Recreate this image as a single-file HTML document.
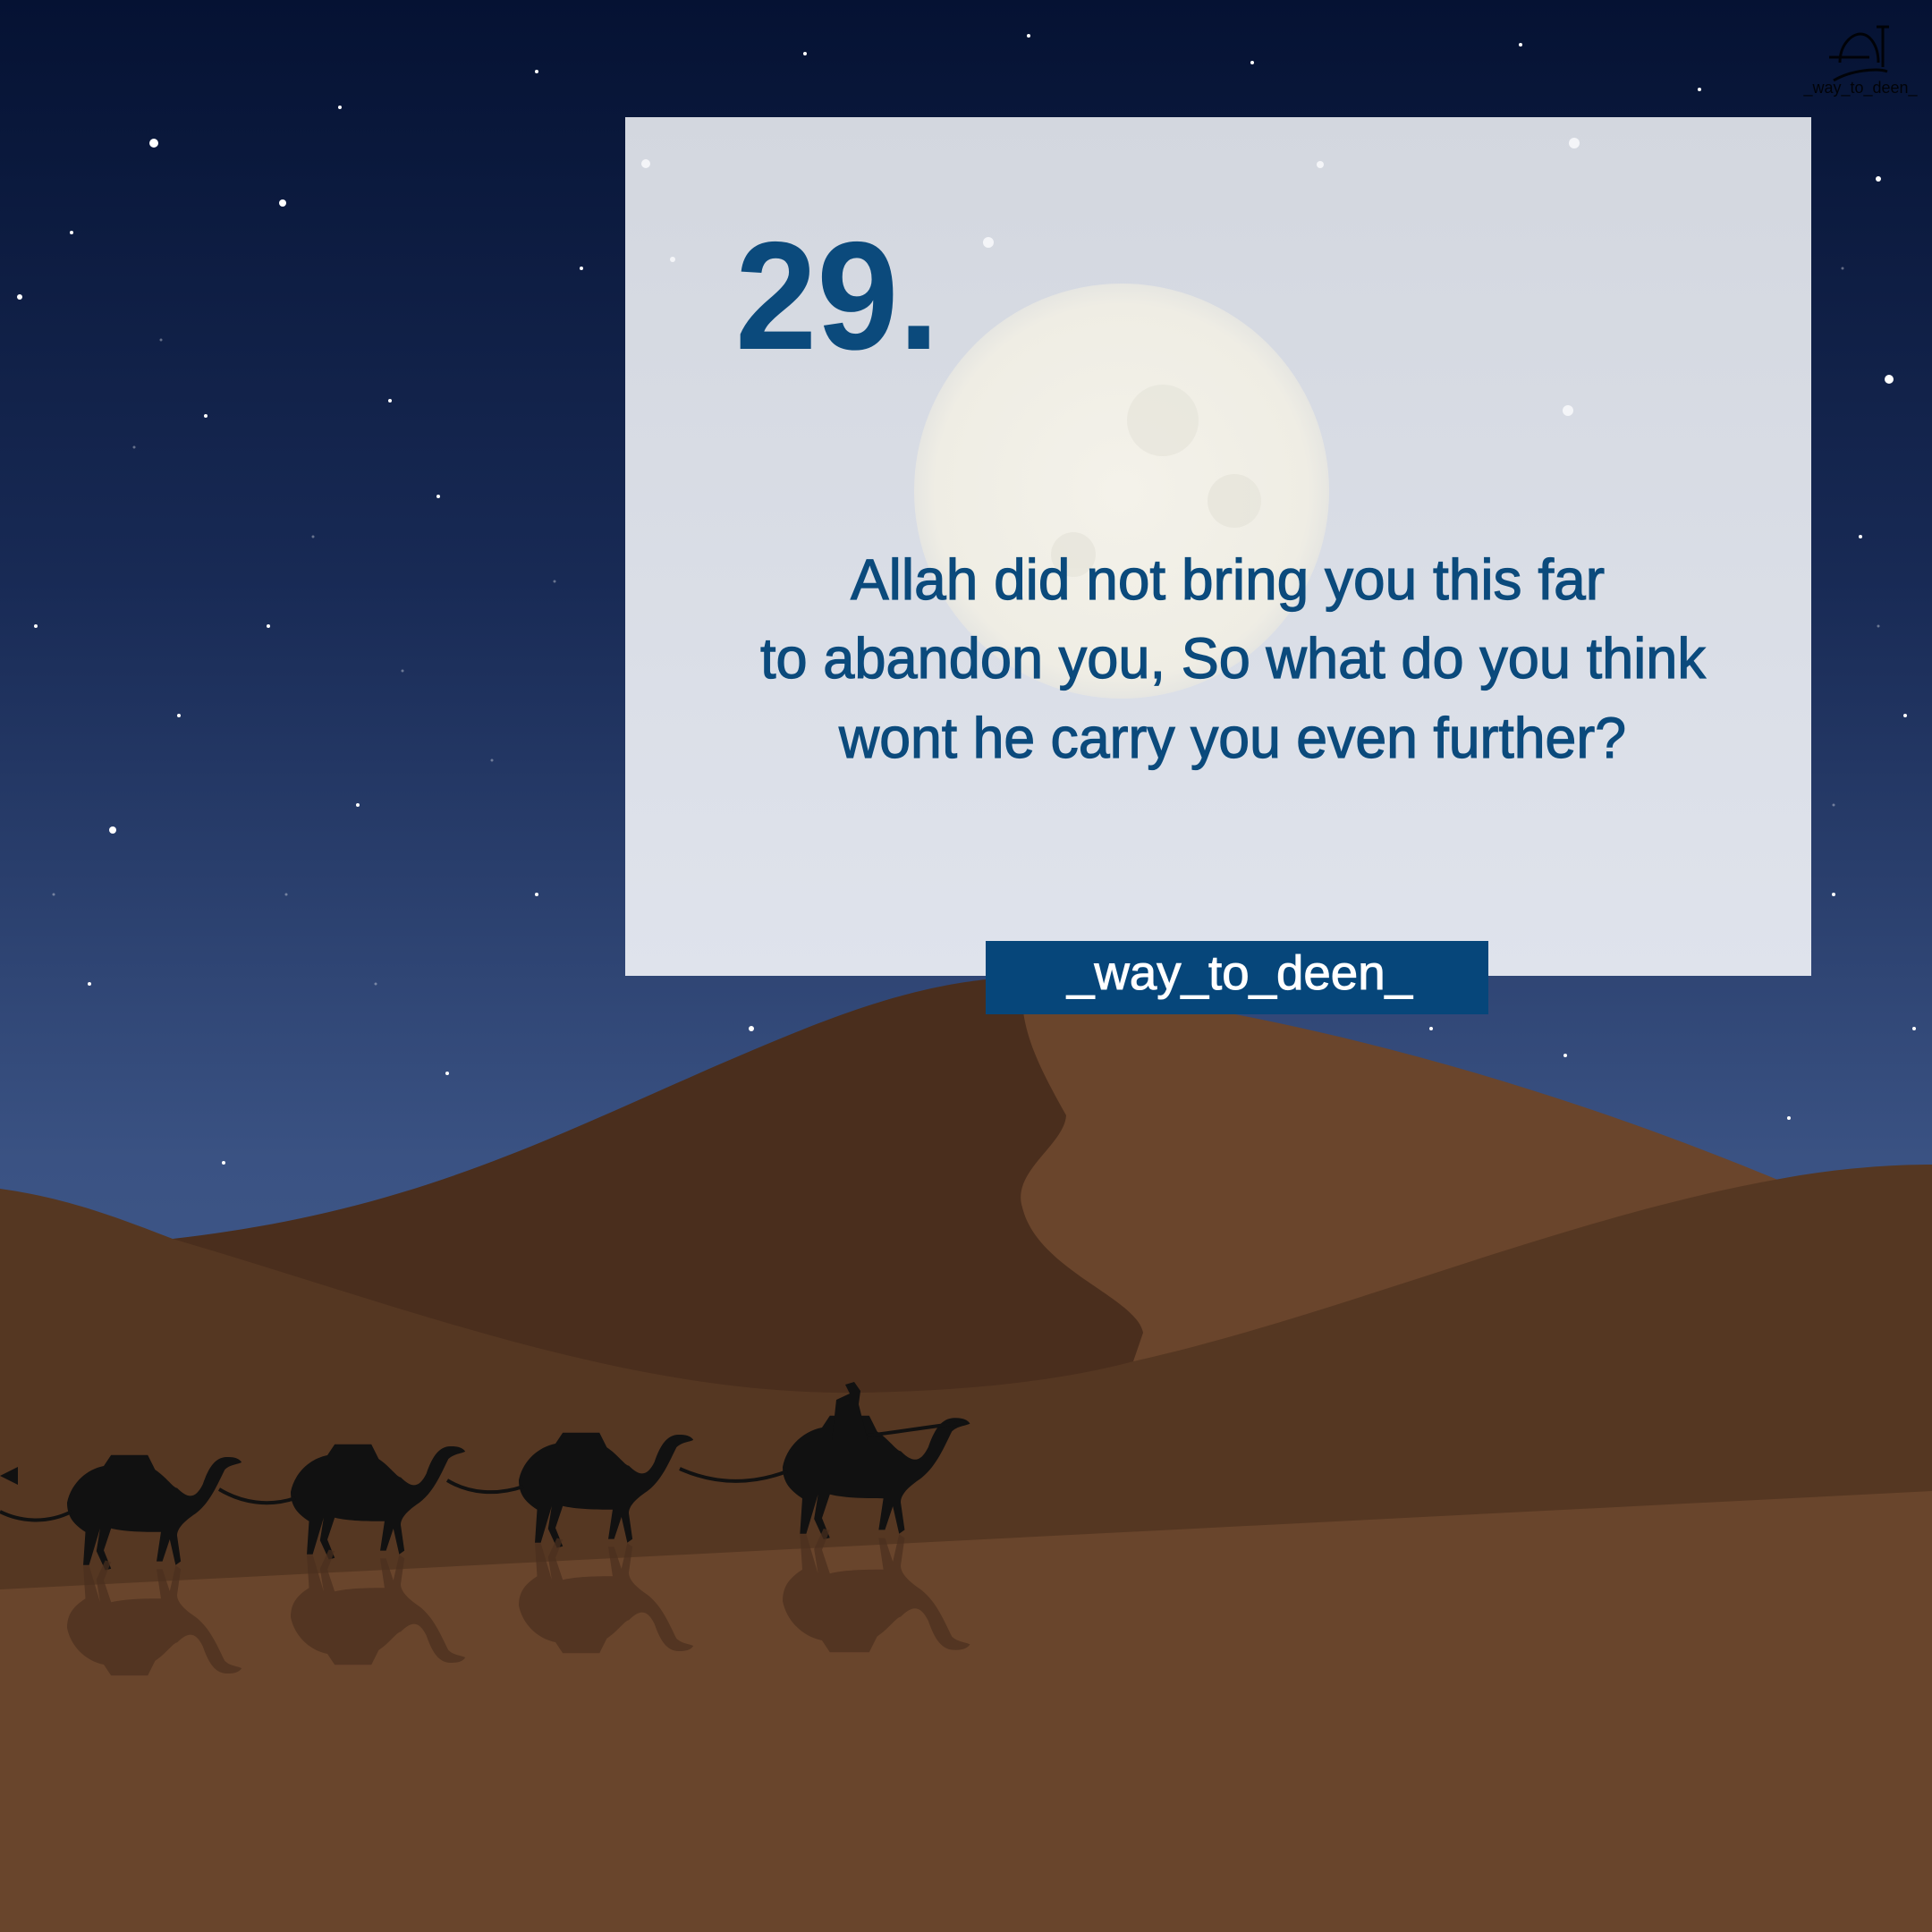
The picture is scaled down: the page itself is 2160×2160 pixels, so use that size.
<!DOCTYPE html>
<html><head><meta charset="utf-8"><style>html,body{margin:0;padding:0;background:#061334}svg{display:block}</style></head>
<body>
<svg width="2160" height="2160" viewBox="0 0 2160 2160" xmlns="http://www.w3.org/2000/svg">
<defs>
<linearGradient id="sky" x1="0" y1="0" x2="0" y2="1">
<stop offset="0" stop-color="#051233"/>
<stop offset="0.3" stop-color="#182a55"/>
<stop offset="0.6" stop-color="#3a5283"/>
<stop offset="1" stop-color="#536c9c"/>
</linearGradient>
<linearGradient id="card" x1="0" y1="0" x2="0" y2="1">
<stop offset="0" stop-color="#d3d7df"/>
<stop offset="1" stop-color="#dfe3ec"/>
</linearGradient>
<radialGradient id="moon" cx="0.5" cy="0.5" r="0.5">
<stop offset="0" stop-color="#f4f2ea"/>
<stop offset="0.9" stop-color="#efede4"/>
<stop offset="1" stop-color="#e6e6e2"/>
</radialGradient>
<path id="camel" d="M0,0 C5,-25 25,-45 50,-50 L60,-65 L110,-65 L120,-45 C135,-35 145,-20 150,-20 C165,-5 175,-5 185,-25 C192,-45 200,-60 215,-62 C228,-63 235,-60 238,-55 C232,-52 222,-52 215,-45 C205,-25 195,0 175,15 C160,25 150,35 150,45 L155,80 L148,85 L140,50 L130,80 L122,80 L128,40 C110,40 80,40 60,35 L50,65 L60,90 L52,92 L40,66 L45,35 L30,85 L22,85 L25,40 C10,30 0,20 0,0 Z"/>
</defs>
<rect width="2160" height="2160" fill="url(#sky)"/>
<g fill="#fff">
<circle cx="172" cy="160" r="5"/><circle cx="316" cy="227" r="4"/><circle cx="22" cy="332" r="3"/><circle cx="126" cy="928" r="4"/><circle cx="2112" cy="424" r="5"/><circle cx="436" cy="448" r="2"/><circle cx="490" cy="555" r="2"/><circle cx="230" cy="465" r="2"/><circle cx="80" cy="260" r="2"/><circle cx="600" cy="80" r="2"/><circle cx="900" cy="60" r="2"/><circle cx="1150" cy="40" r="2"/><circle cx="1400" cy="70" r="2"/><circle cx="1700" cy="50" r="2"/><circle cx="1900" cy="100" r="2"/><circle cx="2100" cy="200" r="3"/><circle cx="2080" cy="600" r="2"/><circle cx="2130" cy="800" r="2"/><circle cx="2050" cy="1000" r="2"/><circle cx="2140" cy="1150" r="2"/><circle cx="300" cy="700" r="2"/><circle cx="200" cy="800" r="2"/><circle cx="400" cy="900" r="2"/><circle cx="600" cy="1000" r="2"/><circle cx="500" cy="1200" r="2"/><circle cx="250" cy="1300" r="2"/><circle cx="100" cy="1100" r="2"/><circle cx="40" cy="700" r="2"/><circle cx="650" cy="300" r="2"/><circle cx="380" cy="120" r="2"/><circle cx="840" cy="1150" r="3"/><circle cx="1750" cy="1180" r="2"/><circle cx="1600" cy="1150" r="2"/><circle cx="2000" cy="1250" r="2"/>
</g>
<g opacity="0.35" fill="#fff">
<circle cx="150" cy="500" r="1.5"/><circle cx="350" cy="600" r="1.5"/><circle cx="450" cy="750" r="1.5"/><circle cx="550" cy="850" r="1.5"/><circle cx="320" cy="1000" r="1.5"/><circle cx="420" cy="1100" r="1.5"/><circle cx="60" cy="1000" r="1.5"/><circle cx="620" cy="650" r="1.5"/><circle cx="2060" cy="300" r="1.5"/><circle cx="2100" cy="700" r="1.5"/><circle cx="2050" cy="900" r="1.5"/><circle cx="180" cy="380" r="1.5"/>
</g>
<rect x="699" y="131" width="1326" height="960" fill="url(#card)"/>
<circle cx="1254" cy="549" r="232" fill="url(#moon)"/>
<g fill="#e4e2d8" opacity="0.6"><circle cx="1300" cy="470" r="40"/><circle cx="1380" cy="560" r="30"/><circle cx="1200" cy="620" r="25"/></g>
<g fill="#f4f5f8"><circle cx="722" cy="183" r="5"/><circle cx="1105" cy="271" r="6"/><circle cx="1476" cy="184" r="4"/><circle cx="1760" cy="160" r="6"/><circle cx="1753" cy="459" r="6"/><circle cx="752" cy="290" r="3"/></g>
<path d="M1102,1095 C1400,1120 1700,1200 1990,1320 L2160,1340 L2160,2160 L1102,2160 Z" fill="#6a452c"/>
<path d="M193,1385 C500,1350 650,1250 900,1150 C1000,1110 1060,1100 1102,1095 L1143,1102 C1140,1150 1160,1190 1192,1247 C1190,1280 1130,1310 1143,1350 C1160,1420 1270,1450 1278,1490 L1267,1522 L1267,2160 L193,2160 Z" fill="#4a2e1d"/>
<path d="M0,1329 C80,1340 140,1365 193,1385 C450,1460 700,1560 960,1557 C1100,1555 1200,1540 1267,1522 C1500,1470 1750,1360 1990,1318 C2060,1305 2120,1302 2160,1302 L2160,2160 L0,2160 Z" fill="#553722"/>
<path d="M0,1777 L2160,1667 L2160,2160 L0,2160 Z" fill="#69452c"/>
<g fill="#111">
<use href="#camel" transform="translate(75,1680) scale(0.82)"/>
<use href="#camel" transform="translate(325,1668) scale(0.82)"/>
<use href="#camel" transform="translate(580,1655) scale(0.82)"/>
<use href="#camel" transform="translate(875,1640) scale(0.88)"/>
<path d="M930,1610 L935,1565 L950,1558 L945,1548 L955,1545 L962,1555 L960,1570 L970,1610 Z"/>
<path d="M0,1650 L20,1640 L20,1660 Z"/>
</g>
<g fill="none" stroke="#111" stroke-width="4">
<path d="M0,1690 C20,1700 50,1705 80,1690"/>
<path d="M245,1665 C270,1680 300,1685 330,1675"/>
<path d="M500,1655 C525,1670 555,1672 585,1662"/>
<path d="M760,1642 C800,1660 840,1660 880,1645"/>
<path d="M970,1605 C1010,1600 1040,1595 1080,1590"/>
</g>
<g fill="#4a2f1e" opacity="0.7">
<use href="#camel" transform="translate(75,1820) scale(0.82,-0.82)"/>
<use href="#camel" transform="translate(325,1808) scale(0.82,-0.82)"/>
<use href="#camel" transform="translate(580,1795) scale(0.82,-0.82)"/>
<use href="#camel" transform="translate(875,1790) scale(0.88,-0.88)"/>
</g>
<g font-family="Liberation Sans, sans-serif" fill="#0b4a7c" stroke="#0b4a7c">
<text x="822" y="390" font-size="172" font-weight="bold" stroke-width="0" textLength="228" lengthAdjust="spacingAndGlyphs">29.</text>
<text x="951" y="670" font-size="64" stroke-width="1.2" textLength="843" lengthAdjust="spacingAndGlyphs">Allah did not bring you this far</text>
<text x="850" y="758" font-size="64" stroke-width="1.2" textLength="1057" lengthAdjust="spacingAndGlyphs">to abandon you, So what do you think</text>
<text x="938" y="847" font-size="64" stroke-width="1.2" textLength="880" lengthAdjust="spacingAndGlyphs">wont he carry you even further?</text>
</g>
<rect x="1102" y="1052" width="562" height="82" fill="#06467a"/>
<text x="1193" y="1106" font-family="Liberation Sans, sans-serif" font-size="54" fill="#fff" stroke="#fff" stroke-width="1" textLength="386" lengthAdjust="spacingAndGlyphs">_way_to_deen_</text>
<g fill="none" stroke="#000" stroke-width="3" opacity="0.85">
<path d="M2057,70 C2057,50 2070,38 2080,38 C2090,38 2100,50 2100,70"/>
<path d="M2045,64 L2090,64"/>
<path d="M2050,90 C2070,78 2100,76 2110,80"/>
<path d="M2105,30 L2105,75 M2098,30 L2112,30"/>
</g>
<text x="2080" y="104" font-family="Liberation Sans, sans-serif" font-size="18" fill="#000" text-anchor="middle" opacity="0.85">_way_to_deen_</text>
</svg>
</body></html>
